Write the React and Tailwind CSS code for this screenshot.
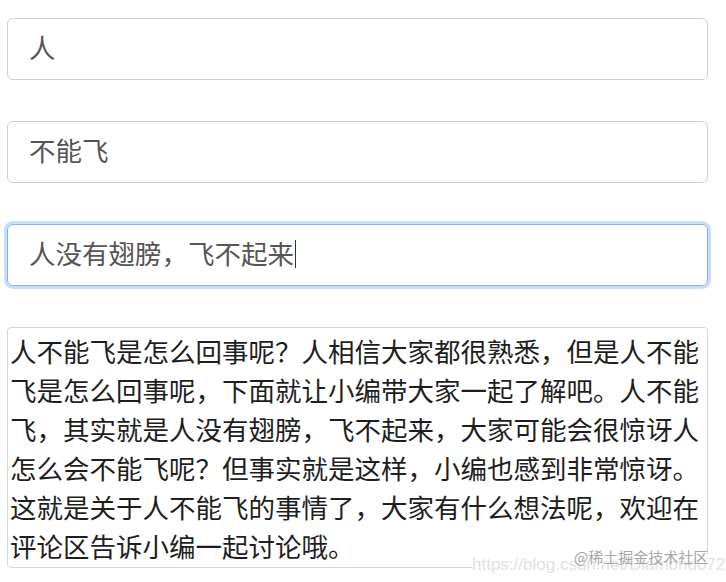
import React from "react";

const font = { fontFamily: '"Noto Sans CJK SC", "Noto Sans", sans-serif' };

const lines = [
  "人不能飞是怎么回事呢？人相信大家都很熟悉，但是人不能",
  "飞是怎么回事呢，下面就让小编带大家一起了解吧。人不能",
  "飞，其实就是人没有翅膀，飞不起来，大家可能会很惊讶人",
  "怎么会不能飞呢？但事实就是这样，小编也感到非常惊讶。",
  "这就是关于人不能飞的事情了，大家有什么想法呢，欢迎在",
  "评论区告诉小编一起讨论哦。",
];

export default function App() {
  return (
    <div className="w-[726px] h-[582px] bg-white overflow-hidden relative" style={font}>
      <div className="pl-[7px] pt-[18px] w-[708px] flex flex-col gap-[41px]">
        <div className="h-[62px] border border-[#cfcfcf] rounded-[6px] pl-[21px] pb-[3px] flex items-center text-[26.5px] text-[#555555] leading-none">
          人
        </div>
        <div className="h-[62px] border border-[#cfcfcf] rounded-[6px] pl-[21px] pb-[3px] flex items-center text-[26.5px] text-[#555555] leading-none">
          不能飞
        </div>
        <div className="h-[62px] border border-[#7fb1ea] rounded-[6px] pl-[21px] pb-[3px] flex items-center text-[26.5px] text-[#555555] leading-none shadow-[0_0_0_3px_#c9ddf6]">
          <span>人没有翅膀，飞不起来</span>
          <span className="inline-block w-[1px] h-[28px] bg-[#333333] ml-[1px]"></span>
        </div>
        <div className="h-[241px] border border-[#d6d6d6] rounded-[4px] pl-[2px] pt-[3px] overflow-hidden text-[26.5px] leading-[39px] text-[#1e1e1e]">
          {lines.map((l, i) => (
            <div key={i} className="whitespace-nowrap">{l}</div>
          ))}
        </div>
      </div>
      <div className="absolute left-[472px] top-[555px] text-[17px] leading-[20px] text-[#e2e2e2] whitespace-nowrap bg-white" style={{ fontFamily: '"Liberation Sans", Arial, sans-serif' }}>
        https://blog.csdn.net/Diamond0728
      </div>
      <div className="absolute left-[574px] top-[547px] text-[15px] leading-[20px] text-[#a6a6a6] whitespace-nowrap">
        @稀土掘金技术社区
      </div>
    </div>
  );
}
